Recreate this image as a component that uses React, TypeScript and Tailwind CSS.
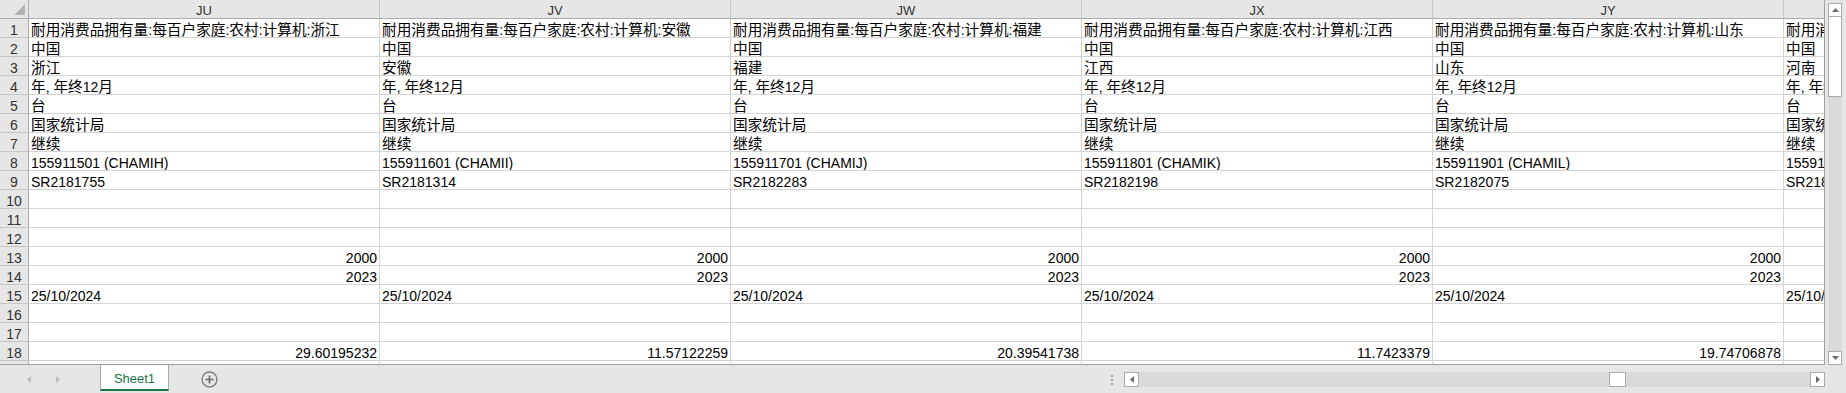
import React from 'react';

type Col = { h: string; prov: string; code: string; sr: string; val: string };

const cols: Col[] = [
  { h: 'JU', prov: '浙江', code: '155911501 (CHAMIH)', sr: 'SR2181755', val: '29.60195232' },
  { h: 'JV', prov: '安徽', code: '155911601 (CHAMII)', sr: 'SR2181314', val: '11.57122259' },
  { h: 'JW', prov: '福建', code: '155911701 (CHAMIJ)', sr: 'SR2182283', val: '20.39541738' },
  { h: 'JX', prov: '江西', code: '155911801 (CHAMIK)', sr: 'SR2182198', val: '11.7423379' },
  { h: 'JY', prov: '山东', code: '155911901 (CHAMIL)', sr: 'SR2182075', val: '19.74706878' },
  { h: 'JZ', prov: '河南', code: '155912001 (CHAMIM)', sr: 'SR2181890', val: '18.95310674' },
];

const CJK = /([\u3000-\u303f\u4e00-\u9fff\uff00-\uffef]+)/;

// CJK runs get the wider east-asian face, latin stays on the Arial-metric one
function Txt({ s }: { s: string }) {
  return (
    <>
      {s.split(CJK).map((p, i) =>
        CJK.test(p) ? (
          <span key={i} className="font-['Noto_Sans_CJK_SC',sans-serif] text-[14.67px] leading-[10px]">
            {p}
          </span>
        ) : (
          <React.Fragment key={i}>{p}</React.Fragment>
        )
      )}
    </>
  );
}

function cellFor(row: number, c: Col): { text: string; right?: boolean } {
  switch (row) {
    case 1: return { text: '耐用消费品拥有量:每百户家庭:农村:计算机:' + c.prov };
    case 2: return { text: '中国' };
    case 3: return { text: c.prov };
    case 4: return { text: '年, 年终12月' };
    case 5: return { text: '台' };
    case 6: return { text: '国家统计局' };
    case 7: return { text: '继续' };
    case 8: return { text: c.code };
    case 9: return { text: c.sr };
    case 13: return { text: '2000', right: true };
    case 14: return { text: '2023', right: true };
    case 15: return { text: '25/10/2024' };
    case 18: return { text: c.val, right: true };
    default: return { text: '' };
  }
}

const rows = Array.from({ length: 18 }, (_, i) => i + 1);

function Tri({ dir, color = '#6d6d6d' }: { dir: 'up' | 'down' | 'left' | 'right'; color?: string }) {
  const pts = {
    up: '0,4 7,4 3.5,0',
    down: '0,0 7,0 3.5,4',
    left: '4,0 4,7 0,3.5',
    right: '0,0 0,7 4,3.5',
  }[dir];
  const vert = dir === 'up' || dir === 'down';
  return (
    <svg width={vert ? 7 : 4} height={vert ? 4 : 7} viewBox={vert ? '0 0 7 4' : '0 0 4 7'}>
      <polygon points={pts} fill={color} />
    </svg>
  );
}

function HeaderRow() {
  return (
    <div className="flex h-[19px] shrink-0 bg-[#e6e6e6] border-b border-[#ababab]">
      <div className="w-[29px] shrink-0 border-r border-[#ababab] flex items-end justify-end pr-[3px] pb-[3px]">
        <svg width="11" height="11" viewBox="0 0 11 11">
          <polygon points="11,0 11,11 0,11" fill="#b4b4b4" />
        </svg>
      </div>
      {cols.map((c) => (
        <div
          key={c.h}
          className="w-[351px] shrink-0 border-r border-[#c6c6c6] text-center text-[13px] leading-[18px] pt-[2px] text-[#333] overflow-hidden"
        >
          {c.h}
        </div>
      ))}
    </div>
  );
}

function DataRow({ r }: { r: number }) {
  return (
    <div className="flex h-[19px] shrink-0">
      <div className="w-[29px] shrink-0 bg-[#e6e6e6] border-r border-b border-r-[#ababab] border-b-[#c6c6c6] text-center text-[14px] leading-[15px] pt-[4px] text-[#333] overflow-hidden">
        {r}
      </div>
      {cols.map((c) => {
        const cell = cellFor(r, c);
        return (
          <div
            key={c.h}
            className={
              'w-[351px] shrink-0 border-r bg-white border-b border-[#d4d4d4] px-[2px] pt-[4px] leading-[15px] text-[14px] text-black whitespace-nowrap overflow-hidden ' +
              (cell.right ? 'text-right' : 'text-left')
            }
          >
            <Txt s={cell.text} />
          </div>
        );
      })}
    </div>
  );
}

function VScroll() {
  return (
    <div className="w-[21px] shrink-0 bg-[#e6e6e6] pl-[3px] pr-[4px] pt-[3px] flex flex-col">
      <div className="h-[14px] shrink-0 bg-white border border-[#ababab] flex items-center justify-center">
        <Tri dir="up" />
      </div>
      <div className="h-[80px] shrink-0 bg-white border border-t-0 border-[#ababab]" />
      <div className="flex-1 bg-[#dadada]" />
      <div className="h-[14px] shrink-0 bg-white border border-[#ababab] flex items-center justify-center">
        <Tri dir="down" />
      </div>
    </div>
  );
}

function TabBar() {
  return (
    <div className="flex h-[28px] shrink-0 bg-[#e6e6e6] items-start">
      <div className="w-[100px] shrink-0 h-[28px] flex items-center pl-[27px] gap-[25px]">
        <Tri dir="left" color="#bdbdbd" />
        <Tri dir="right" color="#bdbdbd" />
      </div>
      <div className="w-[69px] shrink-0 h-[26px] bg-white border-l border-r border-[#ababab] border-b-[2px] border-b-[#217346] flex justify-center">
        <span className="text-[13px] leading-[15px] pt-[6px] text-[#217346]">Sheet1</span>
      </div>
      <div className="w-[81px] shrink-0 h-[28px] flex items-center justify-center">
        <svg width="17" height="17" viewBox="0 0 17 17">
          <circle cx="8.5" cy="8.5" r="7.5" fill="none" stroke="#7a7a7a" strokeWidth="1.3" />
          <path d="M8.5 4.5v8M4.5 8.5h8" stroke="#6a6a6a" strokeWidth="1.6" />
        </svg>
      </div>
      <div className="flex-1" />
      <div className="flex items-center h-[15px] mt-[7px] mr-[21px]">
        <div className="w-[24px] h-full flex flex-col items-center justify-center gap-[2px]">
          <div className="w-[2px] h-[2px] bg-[#a8a8a8]" />
          <div className="w-[2px] h-[2px] bg-[#a8a8a8]" />
          <div className="w-[2px] h-[2px] bg-[#a8a8a8]" />
        </div>
        <div className="w-[15px] h-[15px] bg-white border border-[#ababab] flex items-center justify-center">
          <Tri dir="left" />
        </div>
        <div className="w-[671px] h-[15px] bg-[#dadada] flex items-center">
          <div className="ml-[470px] w-[17px] h-[15px] bg-white border border-[#ababab]" />
        </div>
        <div className="w-[15px] h-[15px] bg-white border border-[#ababab] flex items-center justify-center">
          <Tri dir="right" />
        </div>
      </div>
    </div>
  );
}

export default function App() {
  return (
    <div className="w-[1846px] h-[393px] overflow-hidden bg-[#e6e6e6] flex flex-col font-['Liberation_Sans',Arial,sans-serif]">
      <div className="flex h-[365px] shrink-0">
        <div className="w-[1825px] shrink-0 flex flex-col overflow-hidden border-r border-b border-[#9f9f9f] bg-white">
          <HeaderRow />
          {rows.map((r) => (
            <DataRow key={r} r={r} />
          ))}
          <DataRow r={19} />
        </div>
        <VScroll />
      </div>
      <TabBar />
    </div>
  );
}
